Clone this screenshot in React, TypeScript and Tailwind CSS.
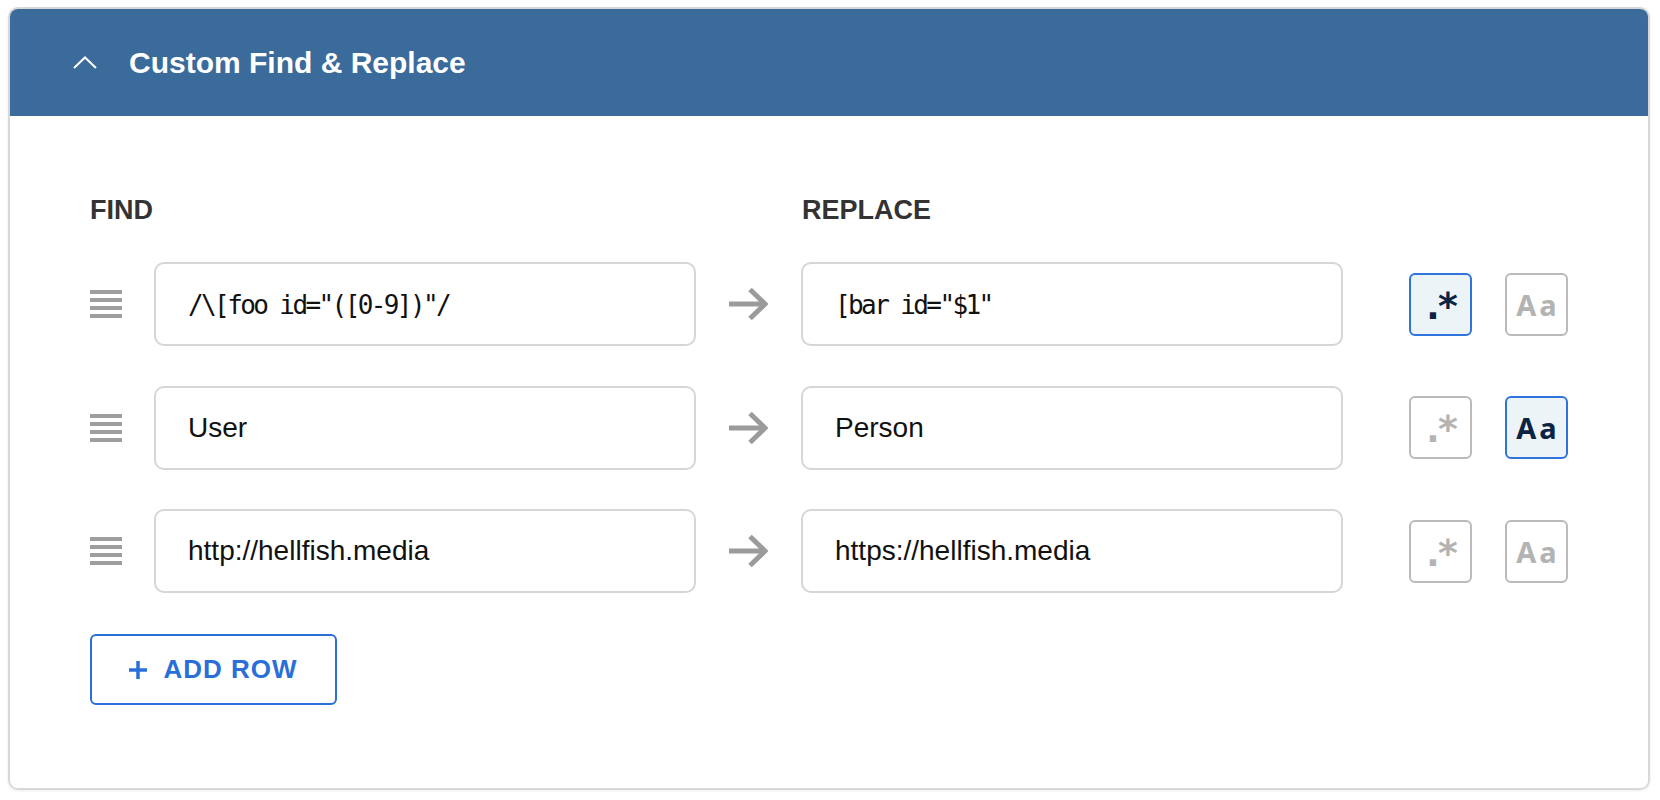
import { Fragment } from "react";

type Row = {
  find: string;
  replace: string;
  regex: boolean;
  caseSensitive: boolean;
};

const rows: Row[] = [
  { find: '/\\[foo id="([0-9])"/', replace: '[bar id="$1"', regex: true, caseSensitive: false },
  { find: "User", replace: "Person", regex: false, caseSensitive: true },
  { find: "http://hellfish.media", replace: "https://hellfish.media", regex: false, caseSensitive: false },
];

function DragHandle() {
  return (
    <div className="w-[32px] shrink-0 flex flex-col gap-[4px]">
      <div className="h-[4px] bg-[#9e9e9e]" />
      <div className="h-[4px] bg-[#9e9e9e]" />
      <div className="h-[4px] bg-[#9e9e9e]" />
      <div className="h-[4px] bg-[#9e9e9e]" />
    </div>
  );
}

function Arrow() {
  return (
    <svg width="39" height="34" viewBox="0 0 39 34" className="shrink-0 mx-[33px]">
      <path d="M0 17 H35" stroke="#9b9b9b" strokeWidth="5" fill="none" />
      <path d="M21 2.5 L36 17 L21 31.5" stroke="#9b9b9b" strokeWidth="5" fill="none" />
    </svg>
  );
}

function TextBox({ value, mono }: { value: string; mono: boolean }) {
  return (
    <div className="h-[84px] w-[542px] shrink-0 border-2 border-[#d6d6d6] rounded-[10px] flex items-center pl-[32px] bg-white">
      {mono ? (
        <span className="font-['DejaVu_Sans_Mono',monospace] text-[26px] tracking-[-2.6px] text-[#111] pt-[2px]">
          {value}
        </span>
      ) : (
        <span className="text-[28px] text-[#111]">{value}</span>
      )}
    </div>
  );
}

function Toggle({ label, active, mono }: { label: string; active: boolean; mono?: boolean }) {
  return (
    <button
      className={
        active
          ? "w-[63px] h-[63px] shrink-0 rounded-[6px] border-2 border-[#2f73dc] bg-[#ecf4f7] text-[#0c2444] flex items-center justify-center"
          : "w-[63px] h-[63px] shrink-0 rounded-[6px] border-2 border-[#bababa] bg-white text-[#b3b3b3] flex items-center justify-center"
      }
    >
      {mono ? (
        <span className="font-['DejaVu_Sans_Mono',monospace] font-bold text-[38px] leading-none tracking-[-8px] pr-[8px] pt-[3px]">
          {label}
        </span>
      ) : (
        <span className="font-['Noto_Sans',sans-serif] font-bold text-[29px] leading-none tracking-[3px] pl-[3px]">
          {label}
        </span>
      )}
    </button>
  );
}

export default function App() {
  return (
    <div className="min-h-screen bg-white pt-[7px] pl-[8px] pr-[10px] font-['Liberation_Sans',Arial,sans-serif]">
      <div className="rounded-[10px] border-2 border-[#d8d8d8] overflow-hidden shadow-[0_1px_3px_rgba(0,0,0,0.08)]">
        <div className="h-[107px] bg-[#3a6b9b] flex items-center pl-[63px] gap-[32px]">
          <svg width="24" height="13" viewBox="0 0 24 13" className="shrink-0">
            <path d="M1 12 L12 1.5 L23 12" stroke="#fff" strokeWidth="2" fill="none" />
          </svg>
          <h2 className="text-[30px] font-bold text-white">Custom Find &amp; Replace</h2>
        </div>
        <div className="bg-white pt-[78px] pb-[83px] pl-[80px]">
          <div className="flex text-[27px] font-bold text-[#333] leading-[32px]">
            <div className="w-[712px]">FIND</div>
            <div>REPLACE</div>
          </div>
          <div className="mt-[36px] flex flex-col gap-[39.5px]">
            {rows.map((row, i) => (
              <div key={i} className="flex items-center">
                <DragHandle />
                <div className="w-[32px] shrink-0" />
                <TextBox value={row.find} mono={row.regex} />
                <Arrow />
                <TextBox value={row.replace} mono={row.regex} />
                <div className="w-[66px] shrink-0" />
                <Toggle label=".*" active={row.regex} mono />
                <div className="w-[33px] shrink-0" />
                <Toggle label="Aa" active={row.caseSensitive} />
              </div>
            ))}
          </div>
          <button className="mt-[41px] h-[71px] w-[247px] rounded-[6px] border-2 border-[#2a6fd9] flex items-center justify-center gap-[16px] text-[#2a6fd9]">
            <svg width="18" height="18" viewBox="0 0 18 18">
              <path d="M9 0 V18 M0 9 H18" stroke="#2a6fd9" strokeWidth="3.5" />
            </svg>
            <span className="text-[26px] font-bold tracking-[1px]">ADD ROW</span>
          </button>
        </div>
      </div>
    </div>
  );
}
